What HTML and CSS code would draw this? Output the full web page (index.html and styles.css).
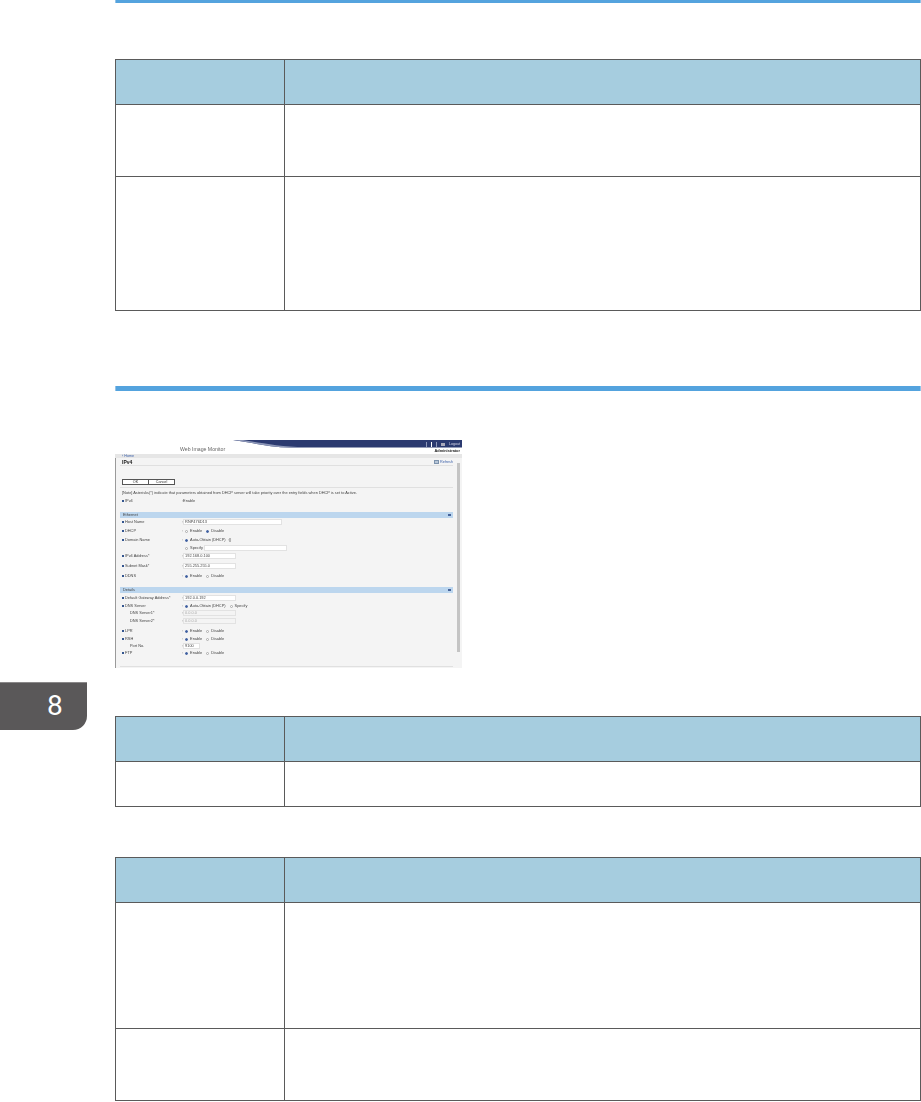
FILE: index.html
```html
<!DOCTYPE html>
<html lang="en">
<head>
<meta charset="utf-8">
<title>IPv4</title>
<link rel="stylesheet" href="styles.css">
</head>
<body>
<div class="tab">8</div>
<main class="page">
  <div class="rule rule-top"></div>
  <table class="spec spec-1">
    <tr class="row-head"><th></th><th></th></tr>
    <tr class="row-72"><td></td><td></td></tr>
    <tr class="row-134"><td></td><td></td></tr>
  </table>
  <div class="rule rule-section"></div>

  <section class="shot">
    <header class="shot-head">
      <svg class="swoosh" viewBox="0 0 347 15" preserveAspectRatio="none" aria-hidden="true">
        <path d="M118 0H347V8H176C155 8 138 3 118 0Z" fill="#2b3a70"/>
        <path d="M118 0C138 3 155 8 176 8H190C165 7 145 3 128 0Z" fill="#8d97b8"/>
      </svg>
      <div class="shot-links"><span class="sep"></span><span class="sep sep-w"></span><span class="sep"></span><span class="logout-ic"></span><span>Logout</span></div>
      <div class="shot-title">Web Image Monitor</div>
      <div class="shot-user">Administrator</div>
    </header>
    <div class="crumb"><span>› Home</span></div>
    <div class="shot-body">
      <div class="shot-main">
        <div class="heading"><strong>IPv4</strong><span class="refresh"><span class="refresh-ic"></span>Refresh</span></div>
        <div class="actions"><span class="btn">OK</span><span class="btn">Cancel</span></div>
        <p class="note">[Note] Asterisks(*) indicate that parameters obtained from DHCP server will take priority over the entry fields when DHCP is set to Active.</p>
        <div class="f"><label><i></i>IPv4</label><div class="v">:Enable</div></div>
        <div class="bar gap-8">Ethernet<b class="caret"></b></div>
        <div class="f gap-1"><label><i></i>Host Name</label><div class="v">:<span class="inp w-99">RNP476D13</span></div></div>
        <div class="f gap-3"><label><i></i>DHCP</label><div class="v">:<u class="r"></u>Enable<u class="r on"></u>Disable</div></div>
        <div class="f gap-3"><label><i></i>Domain Name</label><div class="v">:<u class="r on"></u>Auto-Obtain (DHCP) &nbsp;:()</div></div>
        <div class="f gap-2"><label></label><div class="v">&nbsp;<u class="r"></u>Specify<span class="inp w-83"></span></div></div>
        <div class="f gap-2"><label><i></i>IPv4 Address*</label><div class="v">:<span class="inp w-53">192.168.0.100</span></div></div>
        <div class="f gap-4"><label><i></i>Subnet Mask*</label><div class="v">:<span class="inp w-53">255.255.255.0</span></div></div>
        <div class="f gap-4"><label><i></i>DDNS</label><div class="v">:<u class="r on"></u>Enable<u class="r"></u>Disable</div></div>
        <div class="bar gap-8">Details<b class="caret"></b></div>
        <div class="f gap-2"><label><i></i>Default Gateway Address*</label><div class="v">:<span class="inp w-53">192.0.0.192</span></div></div>
        <div class="f gap-2"><label><i></i>DNS Server</label><div class="v">:<u class="r on"></u>Auto-Obtain (DHCP)<u class="r"></u>Specify</div></div>
        <div class="f gap-1"><label class="sub">DNS Server1*</label><div class="v">:<span class="inp w-53 off">0.0.0.0</span></div></div>
        <div class="f gap-2"><label class="sub">DNS Server2*</label><div class="v">:<span class="inp w-53 off">0.0.0.0</span></div></div>
        <div class="f gap-4"><label><i></i>LPR</label><div class="v">:<u class="r on"></u>Enable<u class="r"></u>Disable</div></div>
        <div class="f gap-2"><label><i></i>RSH</label><div class="v">:<u class="r on"></u>Enable<u class="r"></u>Disable</div></div>
        <div class="f gap-1"><label class="sub">Port No.</label><div class="v">:<span class="inp w-17">9100</span></div></div>
        <div class="f gap-1"><label><i></i>FTP</label><div class="v">:<u class="r on"></u>Enable<u class="r"></u>Disable</div></div>
        <div class="foot"></div>
      </div>
      <div class="scroll"><span class="thumb"></span></div>
    </div>
  </section>

  <table class="spec spec-2">
    <tr class="row-head"><th></th><th></th></tr>
    <tr class="row-45"><td></td><td></td></tr>
  </table>
  <table class="spec spec-3">
    <tr class="row-head"><th></th><th></th></tr>
    <tr class="row-126"><td></td><td></td></tr>
    <tr class="row-72"><td></td><td></td></tr>
  </table>
</main>
</body>
</html>
```

FILE: styles.css
```css
* { box-sizing: border-box; }
html, body { margin: 0; padding: 0; background: #fff; }
body { width: 921px; height: 1102px; overflow: hidden; position: relative; font-family: "Liberation Sans", Arial, sans-serif; }

.tab {
  position: absolute; left: 0; top: 682px; width: 87px; height: 48px;
  background: #5a5859; border-top: 1px solid #8a8889; border-bottom-right-radius: 14px;
  color: #fff; font: 400 28px/1 "Roboto", sans-serif;
  padding: 9px 0 0 47px;
}

.page { margin-left: 115px; width: 806px; }

.rule { background: #54a3de; border-left: 1px solid #93c3e8; border-right: 1px solid #93c3e8; }
.rule-top { height: 3px; }
.rule-section { height: 5px; margin-top: 75px; }

.spec { width: 806px; border-collapse: collapse; table-layout: fixed; }
.spec th, .spec td { border: 1px solid #5a5a5a; padding: 0; }
.spec th { background: #a6cddf; }
.spec th:first-child, .spec td:first-child { width: 169px; }
.spec-1 { margin-top: 56px; }
.spec-2 { margin-top: 48px; }
.spec-3 { margin-top: 50px; }
.row-head { height: 45px; }
.row-45 { height: 45px; }
.row-72 { height: 72px; }
.row-126 { height: 126px; }
.row-134 { height: 134px; }

/* embedded screenshot */
.shot {
  width: 347px; height: 228px; margin-top: 49px;
  font-size: 3.9px; line-height: 6px; color: #444;
  filter: blur(.45px); background: #fff;
}
.shot-head { position: relative; height: 14px; }
.swoosh { position: absolute; inset: 0; width: 100%; height: 100%; }
.shot-links {
  position: absolute; top: 1px; right: 2px; display: flex; align-items: center; gap: 4px;
  height: 6px; color: #dde; font-size: 3.6px;
}
.sep { width: 1px; height: 5px; background: #8d97b8; }
.sep-w { background: #fff; }
.logout-ic { width: 4px; height: 3px; background: #aab; }
.shot-title {
  position: absolute; left: 65px; top: 6px; font-size: 5.2px; line-height: 6px; color: #666;
}
.shot-user {
  position: absolute; right: 2px; top: 8px; font-size: 3.9px; line-height: 6px; font-weight: 700; color: #222;
}
.crumb { height: 4px; background: #e6e6e6; padding-left: 7px; font-size: 3.7px; line-height: 4px; color: #3a5fa8; }

.shot-body { display: flex; height: 210px; }
.shot-main { flex: 1; background: #f4f4f4; border-left: 1px solid #9a9a9a; padding: 0 4px 0 4px; min-width: 0; }
.scroll { width: 5px; background: #f4f4f4; padding: 5px 0 16px 0; }
.thumb { display: block; width: 3px; height: 100%; background: #c4c4c4; }

.heading {
  height: 8px; display: flex; justify-content: space-between; align-items: center;
  border-bottom: 1px solid #e0e0e0; padding: 0 0 0 2px; font-size: 5px; color: #222;
}
.refresh { display: flex; align-items: center; gap: 1px; font-size: 3.7px; color: #3a5fa8; }
.refresh-ic { width: 5px; height: 4px; background: #b9c7d8; border: 1px solid #7d93ad; }

.actions { display: flex; margin: 13px 0 0 2px; height: 6px; padding: 0; }
.btn {
  width: 27px; height: 6px; background: #fff; border: 1px solid #555;
  text-align: center; font-size: 3.7px; line-height: 4px; color: #333;
}
.btn + .btn { margin-left: -1px; }

.note {
  margin: 2px 0 0; height: 11px; padding: 2px 0 0 2px; border-top: 1px solid #e0e0e0;
  font-size: 3.9px; line-height: 6px; white-space: nowrap;
}

.f { display: flex; height: 6px; padding-left: 2px; }
.f label { width: 60px; flex: none; display: flex; align-items: center; gap: 1px; white-space: nowrap; }
.f label i { width: 2px; height: 2px; background: #33558f; }
.f label.sub { padding-left: 8px; }
.v { display: flex; align-items: center; white-space: nowrap; }
.gap-1 { margin-top: 1px; }
.gap-2 { margin-top: 2px; }
.gap-3 { margin-top: 3px; }
.gap-4 { margin-top: 4px; }
.gap-8 { margin-top: 8px; }

.bar {
  height: 6px; background: #bcd6ee; display: flex; align-items: center; justify-content: space-between;
  padding: 0 2px 0 3px;
}
.caret { width: 3px; height: 2px; background: #46639a; }

.inp {
  height: 6px; background: #fff; border: 1px solid #e2e2e2; display: block; line-height: 4px; padding-left: 1px;
}
.off { color: #aaa; background: #f4f4f4; }
.w-99 { width: 99px; }
.w-83 { width: 83px; margin-left: 1px; }
.w-53 { width: 53px; }
.w-17 { width: 17px; }

.r { width: 3px; height: 3px; border-radius: 50%; border: .5px solid #aaa; background: #fff; margin: 0 2px; }
.r.on { background: #3d5fa0; border-color: #3d5fa0; }
.v .r:not(:first-of-type) { margin-left: 4px; }
.foot { margin-top: 10px; border-top: 1px solid #e0e0e0; }
```
